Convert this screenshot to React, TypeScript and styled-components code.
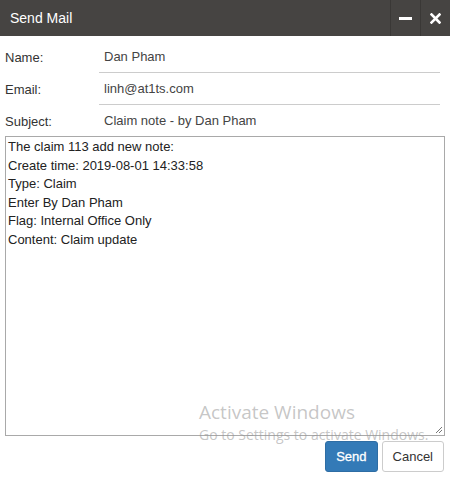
import React from "react";
import styled, { createGlobalStyle } from "styled-components";

const Global = createGlobalStyle`
  html, body { margin: 0; padding: 0; background: #fff; }
  body { font-family: "Liberation Sans", Arial, sans-serif; }
  * { box-sizing: border-box; }
`;

const Dialog = styled.div`
  position: relative;
  width: 450px;
  height: 479px;
  background: #fff;
  display: flex;
  flex-direction: column;
  overflow: hidden;
`;

const TitleBar = styled.div`
  height: 36px;
  background: #464442;
  display: flex;
  align-items: stretch;
`;

const Title = styled.div`
  flex: 1;
  display: flex;
  align-items: center;
  padding-left: 10px;
  color: #fff;
  font-size: 14px;
`;

const TitleButton = styled.div`
  width: 30px;
  display: flex;
  align-items: center;
  justify-content: center;
  border-left: 1px solid #3a3836;
`;

const Body = styled.div`
  padding: 5px 5px 0 5px;
  display: flex;
  flex-direction: column;
`;

const Row = styled.div`
  display: flex;
  height: 32px;
  align-items: stretch;
`;

const Label = styled.div`
  width: 94px;
  display: flex;
  align-items: center;
  font-size: 13px;
  color: #333;
`;

const Field = styled.div`
  width: 341px;
  display: flex;
  align-items: center;
  padding-left: 5px;
  font-size: 13px;
  color: #444;
  border-bottom: 1px solid #ccc;
`;

const TextArea = styled.div`
  position: relative;
  margin-top: -1px;
  width: 440px;
  height: 300px;
  border: 1px solid #a9a9a9;
  padding: 1px 2px;
  font-size: 13px;
  line-height: 18.5px;
  color: #222;
`;

const Grip = styled.svg`
  position: absolute;
  right: 1px;
  bottom: 1px;
`;

const Footer = styled.div`
  display: flex;
  justify-content: flex-end;
  gap: 4px;
  padding: 5px 6px 0 0;
`;

const Button = styled.div<{ $primary?: boolean }>`
  height: 31px;
  padding: 0 10px;
  display: flex;
  align-items: center;
  font-size: 13px;
  border-radius: 3px;
  border: 1px solid ${(p) => (p.$primary ? "#2e6da4" : "#ccc")};
  background: ${(p) => (p.$primary ? "#337ab7" : "#fff")};
  color: ${(p) => (p.$primary ? "#fff" : "#333")};
  -webkit-text-stroke: ${(p) => (p.$primary ? "0.3px #fff" : "0")};
`;

const Watermark = styled.div`
  position: absolute;
  left: 199px;
  top: 400px;
  color: rgba(150, 150, 150, 0.55);
  font-family: "Open Sans", "Noto Sans", sans-serif;
  pointer-events: none;
`;

const WatermarkTitle = styled.div`
  font-size: 19px;
  line-height: 25px;
`;

const WatermarkSub = styled.div`
  font-size: 14px;
  line-height: 20px;
`;

const lines = [
  "The claim 113 add new note:",
  "Create time: 2019-08-01 14:33:58",
  "Type: Claim",
  "Enter By Dan Pham",
  "Flag: Internal Office Only",
  "Content: Claim update",
];

export default function App() {
  return (
    <>
      <Global />
      <Dialog>
        <TitleBar>
          <Title>Send Mail</Title>
          <TitleButton>
            <svg width="13" height="3" viewBox="0 0 13 3">
              <rect x="0" y="0" width="13" height="3" fill="#fff" />
            </svg>
          </TitleButton>
          <TitleButton>
            <svg width="11" height="11" viewBox="0 0 11 11">
              <path d="M1.5 1.5 L9.5 9.5 M9.5 1.5 L1.5 9.5" stroke="#fff" strokeWidth="2.6" strokeLinecap="square" />
            </svg>
          </TitleButton>
        </TitleBar>
        <Body>
          <Row>
            <Label>Name:</Label>
            <Field>Dan Pham</Field>
          </Row>
          <Row>
            <Label>Email:</Label>
            <Field>linh@at1ts.com</Field>
          </Row>
          <Row>
            <Label>Subject:</Label>
            <Field>Claim note - by Dan Pham</Field>
          </Row>
          <TextArea>
            {lines.map((l) => (
              <div key={l}>{l}</div>
            ))}
            <Grip width="9" height="9" viewBox="0 0 9 9">
              <path d="M8 2 L2 8 M8 5 L5 8" stroke="#777" strokeWidth="1" />
            </Grip>
          </TextArea>
        </Body>
        <Footer>
          <Button $primary>Send</Button>
          <Button>Cancel</Button>
        </Footer>
        <Watermark>
          <WatermarkTitle>Activate Windows</WatermarkTitle>
          <WatermarkSub>Go to Settings to activate Windows.</WatermarkSub>
        </Watermark>
      </Dialog>
    </>
  );
}
